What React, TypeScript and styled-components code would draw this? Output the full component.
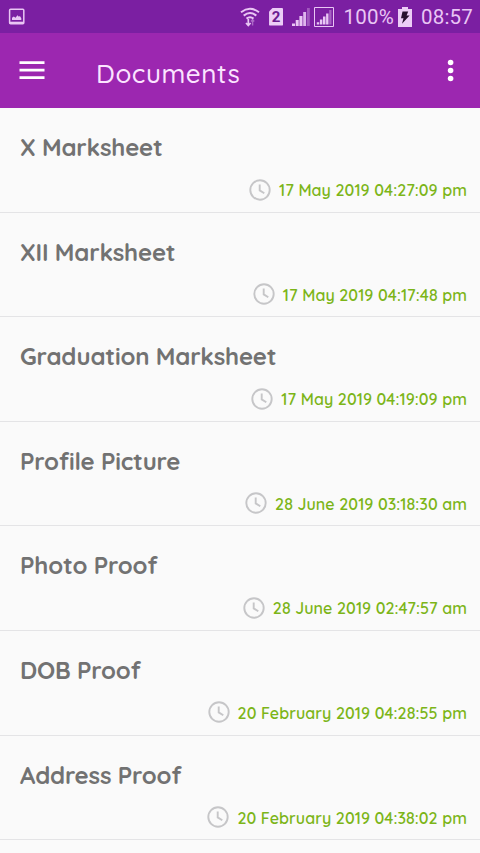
import React from "react";
import styled, { createGlobalStyle } from "styled-components";

const GlobalStyle = createGlobalStyle`
  * { box-sizing: border-box; }
  html, body { margin: 0; padding: 0; background: #fafafa; }
  body { overflow: hidden; }
`;

const Screen = styled.main`
  width: 480px;
  height: 853px;
  overflow: hidden;
  display: flex;
  flex-direction: column;
  background: #fafafa;
  font-family: Quicksand, Lato, sans-serif;
`;

const StatusBar = styled.div`
  flex: none;
  height: 33px;
  padding: 0 7px 0 8px;
  display: flex;
  align-items: center;
  justify-content: space-between;
  background: #7b1fa2;
  color: #e9c6f4;
  svg { display: block; }
`;

const StatusGroup = styled.div`
  display: flex;
  align-items: center;
`;

const StatusText = styled.span`
  font: 400 20.5px/33px Roboto, sans-serif;
  letter-spacing: 0.2px;
  white-space: nowrap;
  padding-top: 2px;
`;

const Toolbar = styled.header`
  flex: none;
  height: 75px;
  display: flex;
  align-items: center;
  padding: 0 19px;
  background: #9c27b0;
`;

const IconButton = styled.button`
  display: flex;
  margin-top: -1px;
  padding: 0;
  border: 0;
  background: none;
`;

const PageTitle = styled.h1`
  flex: 1;
  margin: 6px 0 0 51px;
  font-size: 26px;
  font-weight: 500;
  line-height: 34px;
  letter-spacing: 0.55px;
  color: #fbe4ff;
`;

const List = styled.ul`
  margin: 0;
  padding: 0;
  list-style: none;
`;

const Row = styled.li`
  height: 104.6px;
  padding: 24px 13px 0 20px;
  border-bottom: 1px solid #e4e4e6;
`;

const RowTitle = styled.h2`
  margin: 0;
  font-size: 24px;
  font-weight: 700;
  line-height: 30px;
  letter-spacing: -0.2px;
  color: #727272;
  white-space: nowrap;
`;

const Stamp = styled.div`
  height: 24px;
  margin-top: 15.5px;
  display: flex;
  align-items: center;
  justify-content: flex-end;
`;

const StampText = styled.time`
  margin: 1px 0 0 8px;
  font-size: 16px;
  font-weight: 600;
  line-height: 20px;
  letter-spacing: 0.07px;
  color: #7cb518;
  white-space: nowrap;
`;

const Clock = () => (
  <svg width="22" height="22" viewBox="0 0 22 22" fill="none" stroke="#c6c6c8" strokeWidth="1.9">
    <circle cx="11" cy="11" r="9.7" />
    <path d="M10.7 5.5v5.9l4.6 2.9" />
  </svg>
);

const GalleryIcon = () => (
  <svg width="17" height="17" viewBox="0 0 17 17">
    <rect x="1.6" y="1.2" width="14.2" height="14.6" rx="1" fill="none" stroke="currentColor" strokeWidth="1.5" />
    <path d="M1.5 13.7h14.4v2.2H1.5z" fill="currentColor" />
    <path d="M4 12V9.8l1.8-1.3L7.5 9.7l2-2.4 1.4 1.5 1-.7 1.4 2.2V12z" fill="currentColor" />
  </svg>
);

const WifiIcon = () => (
  <svg width="20" height="20" viewBox="0 0 20 20" fill="none" stroke="currentColor" strokeWidth="2">
    <path d="M1 5.2Q10-1.6 19 5.2M3.7 8.6Q10 3.5 16.3 8.6M6.5 11.6Q10 8.8 13.5 11.6" />
    <path d="M8.3 12v6M6 16l2.3 2.5 2.3-2.5" strokeWidth="1.7" />
    <path d="M12.6 18.5v-6M11 14.5l1.6-2 1.6 2" strokeWidth="1.4" opacity=".45" />
  </svg>
);

const SimBadge = styled.span`
  width: 14px;
  height: 18px;
  margin: 0 9px 0 9px;
  border-radius: 1px;
  clip-path: polygon(28% 0, 100% 0, 100% 100%, 0 100%, 0 22%);
  background: #eccdf6;
  color: #6b1b8f;
  font: 700 15px/19px Roboto, sans-serif;
  text-align: center;
`;

const SignalIcon = () => (
  <svg width="18" height="18" viewBox="0 0 18 18" fill="currentColor">
    <path d="M0 15.5h3V18H0zM3.7 12h3v6h-3zM7.4 8h3.1v10H7.4z" />
    <path d="M11.2 4h2.9v14h-2.9z" opacity=".9" />
    <path d="M15 0h2.8v18H15z" opacity=".35" />
  </svg>
);

const FramedSignalIcon = () => (
  <svg width="20" height="20" viewBox="0 0 20 20" fill="currentColor">
    <path d="M.5 .5h19v19H.5z" fill="none" stroke="currentColor" strokeWidth="1" />
    <path d="M2.8 15.2h2.4v2.3H2.8zM5.9 12.5h2.5v5H5.9zM9 9.5h2.5v8H9zM12.1 6.5h2.4v11h-2.4z" />
    <path d="M15.2 3h2.3v14.5h-2.3z" opacity=".4" />
  </svg>
);

const BatteryIcon = () => (
  <svg width="14" height="20" viewBox="0 0 14 20">
    <path d="M4 0h6v2h4v18H0V2h4z" fill="#eccdf6" />
    <path d="M4.5 4.6h5.7L8.6 8.5h3L4 16.7l1.5-5.4H3z" fill="#28102f" />
  </svg>
);

const MenuIcon = () => (
  <svg width="26" height="20" viewBox="0 0 26 20" fill="#fff">
    <path d="M.5 1.3h25v2.6H.5zM.5 8.8h25v2.6H.5zM.5 16.3h25v2.6H.5z" />
  </svg>
);

const MoreIcon = () => (
  <svg width="22" height="24" viewBox="0 0 22 24" fill="#fff">
    <circle cx="11.6" cy="4.5" r="2.8" />
    <circle cx="11.6" cy="12.5" r="2.8" />
    <circle cx="11.6" cy="20.5" r="2.8" />
  </svg>
);

const Gap = styled.span<{ $w: number }>`
  width: ${(p) => p.$w}px;
`;

type Doc = { title: string; date: string };

const documents: Doc[] = [
  { title: "X Marksheet", date: "17 May 2019 04:27:09 pm" },
  { title: "XII Marksheet", date: "17 May 2019 04:17:48 pm" },
  { title: "Graduation Marksheet", date: "17 May 2019 04:19:09 pm" },
  { title: "Profile Picture", date: "28 June 2019 03:18:30 am" },
  { title: "Photo Proof", date: "28 June 2019 02:47:57 am" },
  { title: "DOB Proof", date: "20 February 2019 04:28:55 pm" },
  { title: "Address Proof", date: "20 February 2019 04:38:02 pm" },
];

export default function App() {
  return (
    <>
      <GlobalStyle />
      <Screen>
        <StatusBar>
          <GalleryIcon />
          <StatusGroup>
            <WifiIcon />
            <SimBadge>2</SimBadge>
            <SignalIcon />
            <Gap $w={4} />
            <FramedSignalIcon />
            <Gap $w={9.5} />
            <StatusText>100%</StatusText>
            <Gap $w={4.5} />
            <BatteryIcon />
            <Gap $w={8.5} />
            <StatusText>08:57</StatusText>
          </StatusGroup>
        </StatusBar>
        <Toolbar>
          <IconButton aria-label="Open menu"><MenuIcon /></IconButton>
          <PageTitle>Documents</PageTitle>
          <IconButton aria-label="More options"><MoreIcon /></IconButton>
        </Toolbar>
        <List>
          {documents.map((doc) => (
            <Row key={doc.title}>
              <RowTitle>{doc.title}</RowTitle>
              <Stamp>
                <Clock />
                <StampText>{doc.date}</StampText>
              </Stamp>
            </Row>
          ))}
        </List>
      </Screen>
    </>
  );
}
